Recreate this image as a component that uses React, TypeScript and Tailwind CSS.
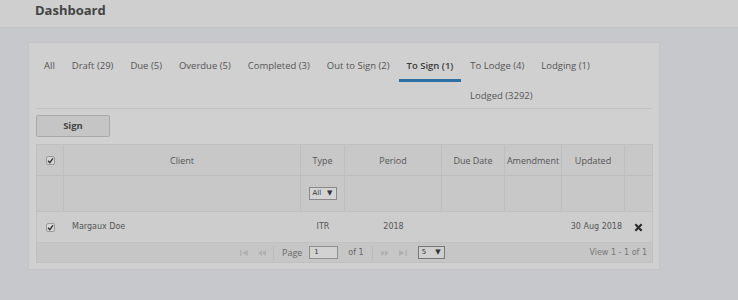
const tabs = [
  { label: "All" },
  { label: "Draft (29)" },
  { label: "Due (5)" },
  { label: "Overdue (5)" },
  { label: "Completed (3)" },
  { label: "Out to Sign (2)" },
  { label: "To Sign (1)", active: true },
  { label: "To Lodge (4)" },
  { label: "Lodging (1)" },
];

const open = { fontFamily: '"Open Sans", "Liberation Sans", sans-serif' };
const verdana = { fontFamily: '"DejaVu Sans", Verdana, sans-serif' };

function Check() {
  return (
    <span className="inline-flex w-[9px] h-[9px] border border-[#9a9a9a] rounded-[2px] bg-[#d6d6d6] items-center justify-center">
      <svg width="7" height="7" viewBox="0 0 10 10">
        <path d="M1.5 5.5 L4 8 L8.5 2" stroke="#333" strokeWidth="2" fill="none" />
      </svg>
    </span>
  );
}

function PagerIcon({ d }: { d: string }) {
  return (
    <svg width="8" height="6" viewBox="0 0 9 7" className="text-[#b0b0b0]">
      <path d={d} fill="currentColor" />
    </svg>
  );
}

export default function App() {
  return (
    <div className="w-[738px] h-[300px] bg-[#c7c8cb] overflow-hidden text-[#4a4a4a]" style={open}>
      <div className="h-[28px] bg-[#cfcfcf] border-b border-[#c3c3c3] pl-[35px] flex items-center">
        <h1 className="text-[13px] font-bold text-[#444] leading-none -mt-[7px]">Dashboard</h1>
      </div>

      <div className="ml-[28px] mt-[14px] w-[632px] h-[228px] bg-[#d0d0d0] border border-[#c4c4c4] px-[7px] pt-[7px]">
        <div className="flex text-[9.5px] leading-[14px]">
          {tabs.map((t) => (
            <div
              key={t.label}
              className={
                "px-2 pt-[9px] pb-[5px] mr-[1px] h-[32px] border-b-[3px] whitespace-nowrap " +
                (t.active ? "border-[#2a6fa3] font-semibold text-[#3a3a3a]" : "border-transparent text-[#555]")
              }
            >
              {t.label}
            </div>
          ))}
        </div>
        <div className="flex text-[9.5px] leading-[14px] h-[27px] border-b border-[#c2c2c2]">
          <div className="ml-[426px] px-2 pt-[7px] text-[#555]">Lodged (3292)</div>
        </div>

        <button className="mt-[6px] w-[74px] h-[22px] bg-[#c5c5c5] border border-[#a9a9a9] rounded-[2px] text-[9.5px] font-bold text-[#444] flex items-center justify-center">
          Sign
        </button>

        <div className="mt-[7px] w-[617px] border border-[#c0c0c0] text-[9px]">
          <div className="flex h-[31px] bg-[#c8c8c8] border-b border-[#bdbdbd] text-[#555]">
            <div className="w-[27px] border-r border-[#bdbdbd] flex items-center justify-center"><Check /></div>
            <div className="w-[237px] border-r border-[#bdbdbd] flex items-center justify-center pt-[2px]">Client</div>
            <div className="w-[44px] border-r border-[#bdbdbd] flex items-center justify-center pt-[2px]">Type</div>
            <div className="w-[97px] border-r border-[#bdbdbd] flex items-center justify-center pt-[2px]">Period</div>
            <div className="w-[63px] border-r border-[#bdbdbd] flex items-center justify-center pt-[2px]">Due Date</div>
            <div className="w-[57px] border-r border-[#bdbdbd] flex items-center justify-center pt-[2px]">Amendment</div>
            <div className="w-[63px] border-r border-[#bdbdbd] flex items-center justify-center pt-[2px]">Updated</div>
            <div className="flex-1"></div>
          </div>
          <div className="flex h-[36px] bg-[#c8c8c8] border-b border-[#c0c0c0]">
            <div className="w-[27px] border-r border-[#bdbdbd]"></div>
            <div className="w-[237px] border-r border-[#bdbdbd]"></div>
            <div className="w-[44px] border-r border-[#bdbdbd] flex items-center justify-center">
              <div className="w-[28px] h-[13px] border border-[#8a8a8a] bg-[#d4d4d4] flex items-center justify-between px-[3px] text-[7px] text-[#333]" style={verdana}>
                <span>All</span>
                <span className="text-[7px]">▼</span>
              </div>
            </div>
            <div className="w-[97px] border-r border-[#bdbdbd]"></div>
            <div className="w-[63px] border-r border-[#bdbdbd]"></div>
            <div className="w-[57px] border-r border-[#bdbdbd]"></div>
            <div className="w-[63px] border-r border-[#bdbdbd]"></div>
            <div className="flex-1"></div>
          </div>
          <div className="flex h-[30px] bg-[#cdcdcd] items-center text-[8px] text-[#555]" style={verdana}>
            <div className="w-[27px] flex justify-center"><Check /></div>
            <div className="w-[237px] pl-[8px]">Margaux Doe</div>
            <div className="w-[44px] text-center">ITR</div>
            <div className="w-[97px] text-center">2018</div>
            <div className="w-[63px]"></div>
            <div className="w-[57px]"></div>
            <div className="w-[63px] text-right pr-[3px] whitespace-nowrap">30 Aug 2018</div>
            <div className="flex-1 flex justify-center">
              <svg width="9" height="9" viewBox="0 0 10 10">
                <path d="M1.5 1.5 L8.5 8.5 M8.5 1.5 L1.5 8.5" stroke="#2b2b2b" strokeWidth="2.4" />
              </svg>
            </div>
          </div>
          <div className="flex h-[20px] bg-[#c6c6c6] items-center text-[8px] text-[#666] border-t border-[#c2c2c2]" style={verdana}>
            <div className="flex items-center ml-[203px] gap-[10px]">
              <PagerIcon d="M0 0h1.5v7H0z M9 0v7L2.5 3.5z" />
              <PagerIcon d="M4.5 0v7L0 3.5z M9 0v7L4.5 3.5z" />
            </div>
            <div className="ml-[7px] w-px h-[14px] bg-[#bbb]"></div>
            <span className="ml-[8px] text-[9px]" style={open}>Page</span>
            <div className="ml-[7px] w-[29px] h-[13px] border border-[#8f8f8f] bg-[#d2d2d2] text-[7px] text-[#333] pl-[4px] leading-[11px]">1</div>
            <span className="ml-[10px]">of 1</span>
            <div className="ml-[8px] w-px h-[14px] bg-[#bbb]"></div>
            <div className="flex items-center ml-[8px] gap-[10px]">
              <PagerIcon d="M0 0v7L4.5 3.5z M4.5 0v7L9 3.5z" />
              <PagerIcon d="M0 0v7L6.5 3.5z M7.5 0H9v7H7.5z" />
            </div>
            <div className="ml-[11px] w-[27px] h-[13px] border border-[#777] bg-[#cfcfcf] flex items-center justify-between px-[3px] text-[7px] text-[#333]">
              <span>5</span>
              <span className="text-[7px]">▼</span>
            </div>
            <div className="flex-1 text-right pr-[5px] text-[#777]">View 1 - 1 of 1</div>
          </div>
        </div>
      </div>
    </div>
  );
}
